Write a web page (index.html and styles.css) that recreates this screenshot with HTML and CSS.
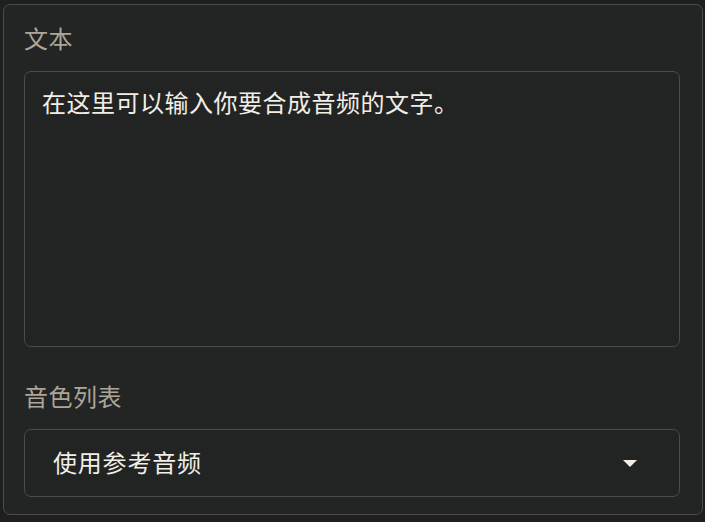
FILE: index.html
```html
<!DOCTYPE html>
<html lang="zh-CN">
<head>
    <meta charset="UTF-8">
    <meta name="viewport" content="width=device-width, initial-scale=1.0">
    <title>语音合成</title>
    <link rel="stylesheet" href="styles.css">
</head>
<body>

<div class="panel">
    <label class="field-label" for="text">文本</label>
    <textarea id="text" class="text-input" readonly>在这里可以输入你要合成音频的文字。</textarea>

    <label class="field-label voice-label">音色列表</label>
    <div class="select">
        <span class="select-value">使用参考音频</span>
        <span class="select-arrow"></span>
    </div>
</div>

</body>
</html>
```

FILE: styles.css
```css
body {
    margin: 0;
    background-color: #1e1f1f;
    font-family: "Noto Sans CJK SC", "Noto Sans", sans-serif;
}
.panel {
    margin: 4px 3px 0 3px;
    width: 700px;
    height: 511px;
    box-sizing: border-box;
    border: 1px solid #4a4b4a;
    border-radius: 7px;
    background-color: #232424;
    padding: 19px 22px 0 20px;
    display: flex;
    flex-direction: column;
}
.field-label {
    font-size: 24px;
    line-height: 28px;
    letter-spacing: 0.5px;
    color: #ada598;
    margin-bottom: 19px;
}
.voice-label {
    margin-top: 35px;
    margin-bottom: 19px;
}
.text-input {
    display: block;
    width: 100%;
    height: 276px;
    box-sizing: border-box;
    margin: 0;
    padding: 13px 17px;
    border: 1px solid #4a4b4a;
    border-radius: 7px;
    background-color: #222424;
    color: #f2eee6;
    font-family: inherit;
    font-size: 24px;
    line-height: 34px;
    letter-spacing: 0.5px;
    resize: none;
    outline: none;
}
.select {
    height: 68px;
    box-sizing: border-box;
    border: 1px solid #4a4b4a;
    border-radius: 7px;
    background-color: #222424;
    display: flex;
    align-items: center;
    justify-content: space-between;
    padding: 0 42px 0 28px;
}
.select-value {
    font-size: 24px;
    letter-spacing: 0.8px;
    color: #f2eee6;
    margin-top: -3px;
}
.select-arrow {
    width: 0;
    height: 0;
    border-left: 7px solid transparent;
    border-right: 7px solid transparent;
    border-top: 7px solid #f2eee6;
    margin-top: 0;
}
```
